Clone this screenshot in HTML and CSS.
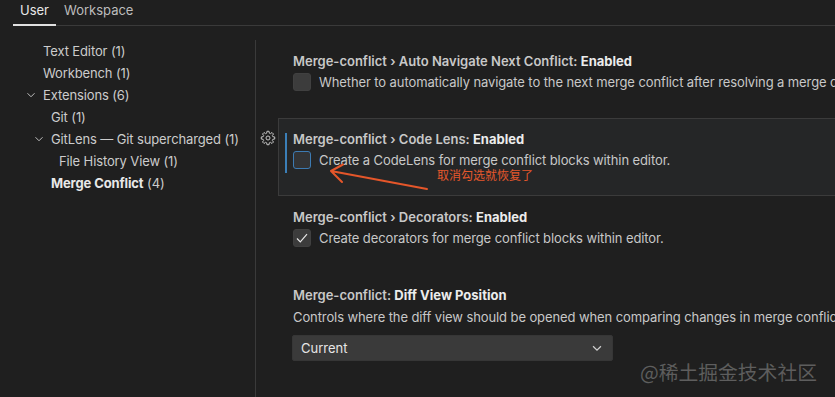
FILE: index.html
```html
<!DOCTYPE html>
<html lang="en">
<head>
<meta charset="utf-8">
<title>Settings</title>
<link rel="stylesheet" href="styles.css">
</head>
<body>
<div class="app">
  <div class="tabs">
    <div class="tab active">User</div>
    <div class="tab">Workspace</div>
  </div>
  <div class="body">
    <nav class="tree">
      <div class="row lv1"><span class="twist"></span><span>Text Editor (1)</span></div>
      <div class="row lv1"><span class="twist"></span><span>Workbench (1)</span></div>
      <div class="row lv1"><span class="twist"><svg viewBox="0 0 16 16" class="chev"><path d="M4 6 L8 10 L12 6"/></svg></span><span>Extensions (6)</span></div>
      <div class="row lv2"><span class="twist"></span><span>Git (1)</span></div>
      <div class="row lv2"><span class="twist"><svg viewBox="0 0 16 16" class="chev"><path d="M4 6 L8 10 L12 6"/></svg></span><span>GitLens — Git supercharged (1)</span></div>
      <div class="row lv3"><span class="twist"></span><span>File History View (1)</span></div>
      <div class="row lv2 current"><span class="twist"></span><span><b>Merge Conflict</b> (4)</span></div>
    </nav>
    <main class="list">
      <section class="item">
        <div class="title"><span class="cat">Merge-conflict › Auto Navigate Next Conflict: </span><span class="label">Enabled</span></div>
        <div class="bool"><span class="cb"></span><span class="desc">Whether to automatically navigate to the next merge conflict after resolving a merge conflict.</span></div>
      </section>
      <section class="item focused">
        <span class="gear"><svg viewBox="0 0 16 16"><path d="M12.83 6.71 L14.72 6.94 L14.72 9.06 L12.83 9.29 L12.33 10.5 L13.5 12 L12 13.5 L10.5 12.33 L9.29 12.83 L9.06 14.72 L6.94 14.72 L6.71 12.83 L5.5 12.33 L4 13.5 L2.5 12 L3.67 10.5 L3.17 9.29 L1.28 9.06 L1.28 6.94 L3.17 6.71 L3.67 5.5 L2.5 4 L4 2.5 L5.5 3.67 L6.71 3.17 L6.94 1.28 L9.06 1.28 L9.29 3.17 L10.5 3.67 L12 2.5 L13.5 4 L12.33 5.5 Z"/><circle cx="8" cy="8" r="2"/></svg></span>
        <span class="indicator"></span>
        <div class="title"><span class="cat">Merge-conflict › Code Lens: </span><span class="label">Enabled</span></div>
        <div class="bool"><span class="cb cb-focus"></span><span class="desc">Create a CodeLens for merge conflict blocks within editor.</span></div>
      </section>
      <section class="item">
        <div class="title"><span class="cat">Merge-conflict › Decorators: </span><span class="label">Enabled</span></div>
        <div class="bool"><span class="cb"><svg viewBox="0 0 16 16" class="check"><path d="M3 8.5 L6.3 11.8 L13 4.2"/></svg></span><span class="desc">Create decorators for merge conflict blocks within editor.</span></div>
      </section>
      <section class="item">
        <div class="title"><span class="cat">Merge-conflict: </span><span class="label">Diff View Position</span></div>
        <div class="desc desc-line">Controls where the diff view should be opened when comparing changes in merge conflicts.</div>
        <div class="select"><span>Current</span><svg viewBox="0 0 16 16" class="select-chev"><path d="M3.5 6 L8 10.5 L12.5 6"/></svg></div>
      </section>
    </main>
  </div>
  <svg class="arrow" viewBox="0 0 835 397" width="835" height="397">
    <path d="M427 189 L331 171 M343 164.5 L331 171 L342 182"/>
  </svg>
  <div class="note">取消勾选就恢复了</div>
  <div class="watermark">@稀土掘金技术社区</div>
</div>
</body>
</html>
```
FILE: styles.css
```css
* { box-sizing: border-box; }
html, body {
  margin: 0;
  padding: 0;
  width: 835px;
  height: 397px;
  overflow: hidden;
  background: #1f1f1f;
}
body {
  font-family: Inter, "Noto Sans", "Noto Sans CJK SC", sans-serif;
  font-size: 13px;
  color: #cccccc;
}
.app {
  position: relative;
  width: 835px;
  height: 397px;
  overflow: hidden;
}
.tabs {
  display: flex;
  height: 26px;
  margin-left: 13px;
  border-bottom: 1px solid #3a3a3a;
}
.tab {
  padding: 0 7px 0 7px;
  margin-right: 1px;
  line-height: 20px;
  color: #bdbdbd;
  border-bottom: 2px solid transparent;
  margin-bottom: -1px;
}
.tab.active {
  color: #e8e8e8;
  border-bottom-color: #e0e0e0;
}
.body {
  display: flex;
  margin-top: 14px;
  height: 357px;
}
.tree {
  width: 256px;
  flex: none;
  border-right: 1px solid #3a3a3a;
}
.row {
  display: flex;
  align-items: center;
  height: 22px;
  color: #cccccc;
  white-space: nowrap;
  letter-spacing: -0.12px;
}
.row.lv1 { padding-left: 27px; }
.row.lv2 { padding-left: 35px; }
.row.lv3 { padding-left: 43px; }
.twist {
  width: 16px;
  height: 16px;
  flex: none;
  display: flex;
  align-items: center;
}
.chev {
  width: 14px;
  height: 14px;
  margin-left: -3px;
  fill: none;
  stroke: #c5c5c5;
  stroke-width: 1.1;
}
.row.current b { color: #e8e8e8; font-weight: 700; }
.list {
  flex: 1;
  min-width: 0;
  overflow: hidden;
}
.item {
  position: relative;
  margin-left: 22px;
  width: 600px;
  height: 78px;
  border: 1px solid transparent;
  border-right: none;
  padding: 11px 0 0 14px;
}
.item.focused {
  background: #252627;
  border-color: #3b3b3b;
}
.title {
  line-height: 18px;
  font-weight: 600;
  white-space: nowrap;
}
.cat { color: #c8c8c8; }
.label { color: #ececec; font-weight: 700; }
.bool {
  display: flex;
  align-items: center;
  margin-top: 3px;
  height: 18px;
  white-space: nowrap;
}
.cb {
  width: 18px;
  height: 18px;
  flex: none;
  border-radius: 3px;
  background: #3c3c3c;
  border: 1px solid #404040;
  margin-right: 8px;
  display: flex;
  align-items: center;
  justify-content: center;
}
.cb-focus {
  border-color: #3d7bb3;
  background: #333436;
}
.check {
  width: 16px;
  height: 16px;
  fill: none;
  stroke: #e6e6e6;
  stroke-width: 1.2;
}
.desc { color: #c8c8c8; letter-spacing: -0.1px; }
.desc-line {
  margin-top: 4px;
  line-height: 18px;
  white-space: nowrap;
}
.indicator {
  position: absolute;
  left: 6px;
  top: 14px;
  width: 2px;
  height: 40px;
  background: #3b7fb8;
}
.gear {
  position: absolute;
  left: -19px;
  top: 11px;
  width: 16px;
  height: 16px;
}
.gear svg {
  width: 16px;
  height: 16px;
  fill: none;
  stroke: #c5c5c5;
  stroke-width: 1;
  stroke-linejoin: round;
}
.select {
  margin-top: 9px;
  margin-left: -1px;
  width: 321px;
  height: 26px;
  background: #3a3a3a;
  border: 1px solid #363636;
  border-radius: 2px;
  display: flex;
  align-items: center;
  justify-content: space-between;
  padding: 0 8px 0 8px;
  color: #e6e6e6;
}
.select-chev {
  width: 14px;
  height: 14px;
  fill: none;
  stroke: #d0d0d0;
  stroke-width: 1.4;
}
.arrow {
  position: absolute;
  left: 0;
  top: 0;
  pointer-events: none;
}
.arrow path {
  fill: none;
  stroke: #e5562a;
  stroke-width: 2;
  stroke-linecap: round;
  stroke-linejoin: round;
}
.note {
  position: absolute;
  left: 437px;
  top: 167px;
  font-size: 12px;
  line-height: 16px;
  color: #e5582c;
  font-family: "Noto Sans CJK SC", sans-serif;
}
.watermark {
  position: absolute;
  left: 640px;
  top: 360px;
  font-size: 19.8px;
  line-height: 24px;
  color: rgba(255, 255, 255, 0.28);
  font-family: "Noto Sans CJK SC", sans-serif;
  white-space: nowrap;
}
```
